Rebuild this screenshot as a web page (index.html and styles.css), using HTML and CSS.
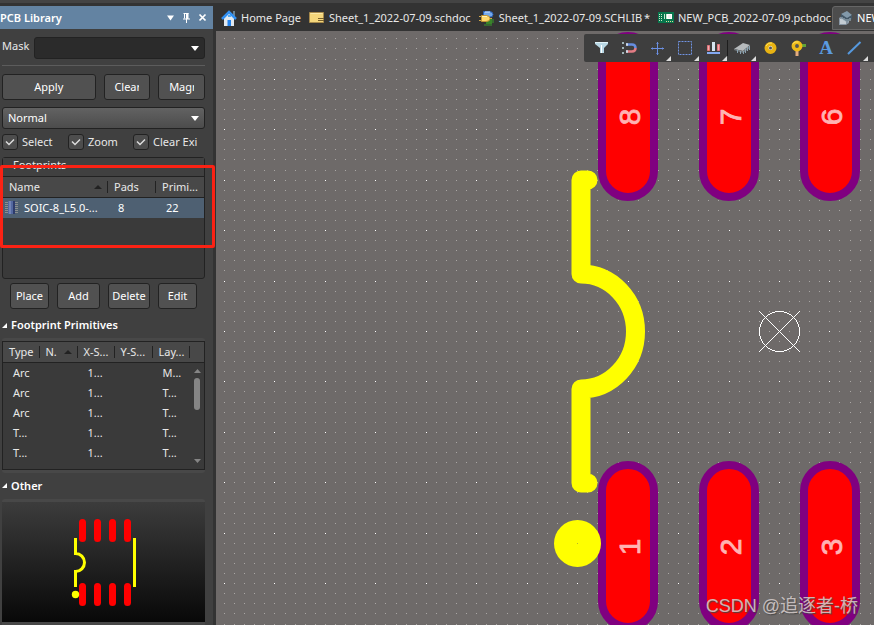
FILE: index.html
```
<!DOCTYPE html>
<html lang="en">
<head>
<meta charset="utf-8">
<title>PCB Library</title>
<link rel="stylesheet" href="styles.css">
</head>
<body>
<div class="app">
  <aside class="panel">
    <header class="panel-head">
      <h1>PCB Library</h1>
      <button type="button" aria-label="Panel menu"><svg width="16" height="16" viewBox="0 0 16 16"><path d="M5 5.500h7l-3.500 5z" fill="#fff"/></svg></button>
      <button type="button" aria-label="Pin panel"><svg width="16" height="16" viewBox="0 0 16 16"><path d="M5.500 3.500h5M6.500 3.500v5M5 9h7M8.500 9v4" stroke="#fff" fill="none"/><path d="M8 3h2.500v6H8z" fill="#fff"/></svg></button>
      <button type="button" aria-label="Close panel"><svg width="16" height="16" viewBox="0 0 16 16"><path d="M5.500 4.500l6 6M11.500 4.500l-6 6" stroke="#fff" stroke-width="1.700"/></svg></button>
    </header>
    <div class="panel-body">
      <div class="mask">
        <label for="mask">Mask</label>
        <select id="mask" class="dark"><option></option></select>
      </div>
      <div class="actions">
        <button type="button"><span>Apply</span></button>
        <button type="button"><span class="cut">Clear</span></button>
        <button type="button"><span class="cut">Magnify</span></button>
      </div>
      <select class="mode" aria-label="Highlight mode"><option>Normal</option></select>
      <div class="checks">
        <label><input type="checkbox" checked><span>Select</span></label>
        <label><input type="checkbox" checked><span>Zoom</span></label>
        <label><input type="checkbox" checked><span>Clear Exi</span></label>
      </div>
      <section class="footprints">
        <h2>Footprints</h2>
        <table>
          <colgroup><col class="w-name"><col class="w-pads"><col></colgroup>
          <thead><tr><th class="sorted">Name</th><th>Pads</th><th>Primi...</th></tr></thead>
          <tbody><tr class="selected"><td><svg width="14" height="14" viewBox="0 0 14 14"><path d="M0 1.500h3M0 3.500h3M0 5.500h3M0 7.500h3M0 9.500h3M0 11.500h3M10 1.500h3M10 3.500h3M10 5.500h3M10 7.500h3M10 9.500h3M10 11.500h3" stroke="#8b8f91"/><rect x="3" width="7" height="13" fill="#5368a0"/><path d="M4 0h2v13H4z" fill="#7284b5"/><path d="M8 0h2v13H8z" fill="#2e3c6c"/></svg>SOIC-8_L5.0-...</td><td>8</td><td>22</td></tr></tbody>
        </table>
      </section>
      <div class="edit">
        <button type="button">Place</button><button type="button">Add</button><button type="button">Delete</button><button type="button">Edit</button>
      </div>
      <h2 class="section">Footprint Primitives</h2>
      <section class="primitives">
        <table>
          <colgroup><col class="w-type"><col class="w-n"><col class="w-x"><col class="w-y"><col class="w-layer"><col></colgroup>
          <thead><tr><th>Type</th><th class="sorted">N.</th><th>X-S...</th><th>Y-S...</th><th>Lay...</th><th></th></tr></thead>
          <tbody>
            <tr><td>Arc</td><td></td><td>1...</td><td></td><td>M...</td><td></td></tr>
            <tr><td>Arc</td><td></td><td>1...</td><td></td><td>T...</td><td></td></tr>
            <tr><td>Arc</td><td></td><td>1...</td><td></td><td>T...</td><td></td></tr>
            <tr><td>T...</td><td></td><td>1...</td><td></td><td>T...</td><td></td></tr>
            <tr><td>T...</td><td></td><td>1...</td><td></td><td>T...</td><td></td></tr>
          </tbody>
        </table>
        <div class="scroll"><svg width="14" height="106" viewBox="0 0 14 106"><path d="M4 10h7L7.500 6zM4 96h7l-3.500 4z" fill="#858585"/><rect x="4" y="15" width="6" height="32" rx="3" fill="#858585"/></svg></div>
      </section>
      <h2 class="section">Other</h2>
      <section class="preview">
        <svg width="203" height="120" viewBox="2 502 203 120">
          <g stroke="#f00" stroke-width="7" stroke-linecap="round"><path d="M82.500 522.500v16M97.500 522.500v16M112.500 522.500v16M127.500 522.500v16M82.500 586.500v16M97.500 586.500v16M112.500 586.500v16M127.500 586.500v16"/></g>
          <path d="M77 539.500h-1.500v14a9 9 0 0 1 0 18v14H77M133 539.500h1.500v46H133" fill="none" stroke="#ff0" stroke-width="3"/>
          <circle cx="75.500" cy="594.500" r="3.700" fill="#ff0"/>
        </svg>
      </section>
    </div>
    <div class="marker"></div>
  </aside>
  <main>
    <nav class="tabs">
      <a href="#home"><svg width="16" height="16" viewBox="0 0 16 16"><path d="M12 1h2v5h-2z" fill="#698294"/><path d="M3 8l5-5 5 5v8H3z" fill="#e2e9ef"/><path d="M1 9l7-7 7 7" fill="none" stroke="#3190f2" stroke-width="2.500"/><path d="M6.500 10h3.500v6H6.500z" fill="#2283ed"/><path d="M7 5h3v2H7z" fill="#54aaf5"/></svg>Home Page</a>
      <a href="#sch"><svg width="16" height="16" viewBox="0 0 16 16"><path d="M.5 2.500h14v10H.5z" fill="#f4d67b" stroke="#a6894b"/><path d="M9 8.500h6M9 10.500h6" stroke="#775f2b"/><path d="M1.500 3.500h12" stroke="#fae9a9"/></svg>Sheet_1_2022-07-09.schdoc</a>
      <a href="#schlib"><svg width="16" height="16" viewBox="0 0 16 16"><path d="M7 9h6v5H7z" fill="#388329"/><path d="M6 14v2M8 14v2M10 14v2M12 14v2M13 10h2M13 12h2" stroke="#399a2c"/><path d="M4.500 1.500H10q4 0 4 3T10 7H4.500z" fill="#75a9eb" stroke="#2d65bb"/><path d="M6 2h5" stroke="#d5e8ff"/><path d="M0 6.500h3M0 10.500h3M9 8.500h4" stroke="#d2a94a"/><path d="M2.500 5.500H7q4 0 4 3t-4 3H2.500z" fill="#ffd96b" stroke="#c39533"/><path d="M3 6.500h5" stroke="#fff2b5"/></svg><span>Sheet_1_2022-07-09.SCHLIB&thinsp;*</span></a>
      <a href="#pcb"><svg width="16" height="16" viewBox="0 0 16 16"><path d="M0 2h16v11H0z" fill="#07764d"/><path d="M1 4.500h4M1 6.500h3M1 8.500h4M1 10.500h4" stroke="#d3e7c9" stroke-dasharray="1 1"/><path d="M6.500 4v5M8.500 4v5M13.500 4v5" stroke="#c6e7d0"/><rect x="9.500" y="4.500" width="4" height="4" fill="#eee" stroke="#fff"/><path d="M8 11.500h7" stroke="#e2d998" stroke-dasharray="1 1"/></svg>NEW_PCB_2022-07-09.pcbdoc</a>
      <a href="#pcblib" class="active"><svg width="16" height="16" viewBox="0 0 16 16"><path d="M1 8l3-2h7v7l-3 2H1z" fill="#8896a3"/><path d="M2 9h6v5H2z" fill="#c4ccd2"/><path d="M3 4l6-3 5 4-5 4z" fill="#8299aa"/><path d="M3 4v4l6 4V8zM9 8v4l5-3V5z" fill="#435767"/><path d="M4 7v3M6 8v3M8 9v3M10 9v3M12 8v3" stroke="#aebfc9"/></svg>NEW_PCB_2022-07-09.PcbLib</a>
    </nav>
    <div class="board">
      <svg class="canvas" viewBox="216 31 658 594" preserveAspectRatio="xMinYMin slice">
        <g shape-rendering="crispEdges"><path id="minor" fill="#aaa7a5"/><path id="major" fill="#fff"/></g>
        <g fill="#f00" stroke="#800080" stroke-width="8">
          <rect x="602" y="36" width="52" height="161" rx="26"/><rect x="703" y="36" width="52" height="161" rx="26"/><rect x="804" y="36" width="52" height="161" rx="26"/>
          <rect x="602" y="465" width="52" height="162" rx="26"/><rect x="703" y="465" width="52" height="162" rx="26"/><rect x="804" y="465" width="52" height="162" rx="26"/>
        </g>
        <g class="pad-no">
          <text transform="translate(640 117) rotate(-90)">8</text><text transform="translate(741 117) rotate(-90)">7</text><text transform="translate(842 117) rotate(-90)">6</text>
          <text transform="translate(640 547) rotate(-90)">1</text><text transform="translate(741 547) rotate(-90)">2</text><text transform="translate(842 547) rotate(-90)">3</text>
        </g>
        <path d="M588 180H581V274A54.500 57.500 0 0 1 581 389V483H588" fill="none" stroke="#ff0" stroke-width="19" stroke-linecap="round" stroke-linejoin="round"/>
        <circle cx="577.500" cy="543.500" r="23.500" fill="#ff0"/><path d="M577 543h1v1h-1z" fill="#b5b52b"/>
        <g fill="none" stroke="#fff" shape-rendering="crispEdges"><circle cx="779.500" cy="331.500" r="20"/><path d="M759 311l41 41M800 311l-41 41"/></g>
      </svg>
      <div class="toolbar">
        <button type="button" aria-label="Filter"><svg width="16" height="16" viewBox="0 0 16 16"><path d="M2 2h13v2l-4 4v5H7V8L2 4z" fill="#b8d7e4"/><path d="M2 2.500h13" stroke="#e1f2f8"/><path d="M8.500 5v8" stroke="#fff"/></svg></button>
        <button type="button" aria-label="Snapping"><svg width="16" height="16" viewBox="0 0 16 16"><path d="M1 2h2v2H1zM1 7h2v2H1zM1 12h2v2H1z" fill="#9fb4b8"/><path d="M5 4.500h6q3.500 0 3.500 3.500" fill="none" stroke="#668de0" stroke-width="2.500"/><path d="M5 11.500h6q3.500 0 3.500-3.500" fill="none" stroke="#e37c84" stroke-width="2.500"/><path d="M5 3.200h2v2.500H5zM5 10.200h2v2.500H5z" fill="#cbd8e6"/></svg></button>
        <button type="button" class="more" aria-label="Move"><svg width="16" height="16" viewBox="0 0 16 16"><path d="M2 8.500h13M8.500 2v13M3.500 7.500v2M13.500 7.500v2M7.500 3.500h2M7.500 13.500h2" stroke="#6b8fe2" fill="none"/></svg></button>
        <button type="button" class="more" aria-label="Select area"><svg width="16" height="16" viewBox="0 0 16 16"><rect x="1.500" y="1.500" width="13" height="13" fill="none" stroke="#7194e4" stroke-dasharray="2 1"/></svg></button>
        <button type="button" class="more" aria-label="Align"><svg width="16" height="16" viewBox="0 0 16 16"><path d="M2.500 5.500h2v5h-2zM12.500 4.500h2v6h-2z" fill="#efb0b3" stroke="#e0757b"/><path d="M7 2h3v9H7z" fill="#d5e6f0"/><path d="M2 12h13v2H2z" fill="#84a9f2"/></svg></button>
        <i class="sep"></i>
        <button type="button" class="more" aria-label="Place component"><svg width="16" height="16" viewBox="0 0 16 16"><path d="M0 9l9-6 7 2-7 6z" fill="#b6babc"/><path d="M0 9l9 2v2L0 10zM9 11l7-6v3l-7 5z" fill="#747d82"/><path d="M3.500 10v3M6.500 11v3M9.500 11v3M11.500 9v4M13.500 7v4M15.500 6v4" stroke="#8ba2b0"/></svg></button>
        <button type="button" aria-label="Place pad"><svg width="16" height="16" viewBox="0 0 16 16"><circle cx="8.500" cy="8" r="4" fill="#eee" stroke="#e8b313" stroke-width="4"/><circle cx="8.500" cy="8" r="1.500" fill="#555"/><path d="M4 6q2-4 6-3" fill="none" stroke="#ffe262"/></svg></button>
        <button type="button" aria-label="Place via"><svg width="16" height="16" viewBox="0 0 16 16"><path d="M10 5.500h6" stroke="#60a536" stroke-width="3"/><path d="M7 10v6" stroke="#e4ac81" stroke-width="3"/><circle cx="7" cy="6" r="3.700" fill="#555" stroke="#efbb18" stroke-width="3.500"/><path d="M2.500 4q2-3 6-2" fill="none" stroke="#ffe262"/></svg></button>
        <button type="button" class="letter" aria-label="Place string">A</button>
        <button type="button" class="more" aria-label="Place line"><svg width="16" height="16" viewBox="0 0 16 16"><path d="M2 14L14.500 2" stroke="#5699de" stroke-width="2"/></svg></button>
      </div>
      <p class="watermark">CSDN @追逐者-桥</p>
    </div>
  </main>
</div>
<script src="grid.js"></script>
</body>
</html>
```
FILE: grid.js
```
// Board grid: minor dots with a brighter dot at every fifth crossing, centred on the origin marker.
const origin = { x: 779, y: 331 };
const step = 10.09;
let minor = '';
let major = '';
for (let i = -56; i <= 60; i++) {
  for (let j = -30; j <= 60; j++) {
    const x = Math.round(origin.x + i * step - 0.05);
    const y = Math.round(origin.y + j * step - 0.05);
    if (x < 216 || y < 31) continue;
    const dot = `M${x} ${y}h1v1h-1z`;
    if (i % 5 === 0 && j % 5 === 0) major += dot;
    else minor += dot;
  }
}
document.getElementById('minor').setAttribute('d', minor);
document.getElementById('major').setAttribute('d', major);
```
FILE: styles.css
```
* { box-sizing: border-box; }
body {
  margin: 0;
  background: #333;
  color: #e8e8e8;
  font: 11px/16px "Noto Sans", "Open Sans", sans-serif;
}
h1, h2, p { margin: 0; font-size: inherit; }
button, select, input { font: inherit; color: inherit; margin: 0; }
svg { display: block; flex: none; }
.app {
  display: flex;
  height: 100vh;
  overflow: hidden;
  border-top: 3px solid #444;
}
.panel {
  position: relative;
  flex: none;
  width: 216px;
  padding: 3px 3px 0 0;
}
.panel-head {
  display: flex;
  align-items: center;
  height: 23px;
  padding-right: 3px;
  background: #6383a2;
  color: #fff;
}
.panel-head h1 { flex: 1; font-weight: 600; font-size: 11px; }
.panel-head button { padding: 0; border: 0; background: none; }
.panel-body {
  height: 100%;
  padding: 8px 8px 0 2px;
  background: #404040;
}
.mask {
  display: flex;
  align-items: center;
  justify-content: space-between;
  padding-bottom: 6px;
  border-bottom: 1px solid #5c5c5c;
}
.mask label { padding-bottom: 4px; }
select {
  appearance: none;
  height: 22px;
  padding: 0 5px;
  border: 1px solid #222;
  border-radius: 3px;
  color: #fff;
  background: url("data:image/svg+xml,%3Csvg xmlns='http://www.w3.org/2000/svg' width='8' height='5'%3E%3Cpath d='M0 0h8L4 5z' fill='white'/%3E%3C/svg%3E") no-repeat right 5px center, linear-gradient(#626262, #4c4c4c);
}
select.dark { width: 171px; background-color: #2b2b2b; background-image: url("data:image/svg+xml,%3Csvg xmlns='http://www.w3.org/2000/svg' width='8' height='5'%3E%3Cpath d='M0 0h8L4 5z' fill='white'/%3E%3C/svg%3E"); }
.actions {
  display: grid;
  grid-template-columns: 2fr 1fr 1fr;
  gap: 8px;
  margin: 8px 0 7px;
}
.actions button, .edit button {
  display: flex;
  align-items: center;
  justify-content: center;
  height: 26px;
  min-width: 0;
  padding: 0;
  border: 1px solid #222;
  border-radius: 3px;
  background: #515151;
  color: #fff;
}
.cut { width: 25px; overflow: hidden; text-align: left; }
.mode { display: block; width: 100%; }
.checks { display: grid; grid-template-columns: 66px 65px 1fr; margin-top: 5px; }
.checks label { display: flex; align-items: center; gap: 4px; white-space: nowrap; }
.checks input {
  appearance: none;
  width: 16px;
  height: 16px;
  border: 1px solid #222;
  border-radius: 3px;
  background: url("data:image/svg+xml,%3Csvg xmlns='http://www.w3.org/2000/svg' width='14' height='14'%3E%3Cpath d='M3 6.500l3 3 5-5' fill='none' stroke='%23ddd' stroke-width='1.500'/%3E%3C/svg%3E") #4d4d4d;
}
table { width: 100%; border-collapse: collapse; table-layout: fixed; }
th, td {
  height: 20px;
  padding: 0 0 0 6px;
  text-align: left;
  font-weight: 400;
  white-space: nowrap;
  overflow: hidden;
}
thead { background: #484848; }
th {
  background: linear-gradient(#222, #222) no-repeat right center / 1px 12px;
}
th:last-child { background: none; }
.sorted {
  background: url("data:image/svg+xml,%3Csvg xmlns='http://www.w3.org/2000/svg' width='8' height='4'%3E%3Cpath d='M0 4h8L4 0z' fill='%23222'/%3E%3C/svg%3E") no-repeat right 6px center, linear-gradient(#222, #222) no-repeat right center / 1px 12px;
}
thead tr { border-bottom: 1px solid #222; }
.footprints {
  height: 122px;
  margin-top: 7px;
  border: 1px solid #222;
  border-radius: 3px;
  background: #3a3a3a;
}
.footprints h2 {
  height: 19px;
  padding-left: 10px;
  border-bottom: 1px solid #222;
  background: #404040;
  font-weight: 400;
  line-height: 14px;
}
.w-name { width: 105px; }
.w-pads { width: 48px; }
.selected { background: #4e6072; color: #fff; }
.footprints td { padding-left: 10px; }
.footprints td:first-child { display: flex; align-items: center; gap: 5px; padding-left: 2px; }
.edit {
  display: grid;
  grid-template-columns: 39px 43px 42px 39px;
  gap: 8px;
  margin: 4px 0 0 8px;
}
.section { display: flex; align-items: center; gap: 4px; height: 26px; color: #fff; font-weight: 600; }
.section::before { content: ""; border: solid transparent; border-width: 0 0 5px 5px; border-bottom-color: #fff; }
.edit + .section { margin-top: 3px; }
.primitives, .preview { border-radius: 3px; background: #484848; padding: 3px 0; }
.primitives { display: grid; grid-template-columns: 1fr; }
.primitives table, .scroll { grid-area: 1 / 1; }
.primitives table { border: 1px solid #222; background: #3a3a3a; height: 128px; }
.primitives th { height: 21px; }
.primitives tbody::after { content: ""; display: block; height: 6px; }
.primitives td { padding-left: 10px; }
.scroll { place-self: end; padding: 0 1px 1px 0; }
.w-type { width: 37px; }
.w-n { width: 38px; }
.w-x { width: 37px; }
.w-y { width: 38px; }
.w-layer { width: 37px; }
.preview { height: 128px; }
.preview svg { background: linear-gradient(#3c3c3c, #080808); }
.marker {
  position: absolute;
  top: 162px;
  left: 0;
  width: 215px;
  height: 83px;
  border: 3px solid #fb2214;
  border-radius: 2px;
}
main { flex: 1; min-width: 0; display: flex; flex-direction: column; }
.tabs { display: flex; height: 28px; padding: 3px 0 0 5px; overflow: hidden; }
.tabs a {
  display: flex;
  align-items: center;
  gap: 4px;
  flex: none;
  height: 24px;
  margin-right: 8px;
  color: inherit;
  text-decoration: none;
  white-space: nowrap;
}
.tabs .active { gap: 3px; margin: 0 0 0 -7px; padding-left: 5px; border: 1px solid #666; border-radius: 3px 0 0 0; background: #4d4d4d; color: #fff; }
.board { position: relative; flex: 1; min-height: 0; background: #6e6a69; overflow: hidden; }
.canvas { width: 100%; height: 100%; }
.pad-no text { fill: #ffb3b3; stroke: #ffb3b3; stroke-width: .8px; font: 30px "Liberation Sans", sans-serif; text-anchor: middle; }
.toolbar {
  position: absolute;
  top: 3px;
  right: 0;
  display: flex;
  width: 290px;
  height: 28px;
  padding-left: 3px;
  border-radius: 2px 0 0 2px;
  background: #3e3e3e;
}
.toolbar button {
  position: relative;
  display: flex;
  align-items: center;
  justify-content: center;
  flex: none;
  width: 28px;
  padding: 0;
  border: 0;
  background: none;
}
.more::after {
  content: "";
  position: absolute;
  right: 0;
  bottom: 1px;
  border: solid transparent;
  border-width: 0 0 5px 5px;
  border-bottom-color: #ddd;
}
.toolbar .letter { color: #5b9be0; font: bold 19px "Liberation Serif", serif; }
.sep { width: 1px; height: 16px; margin-top: 6px; background: #1d1d1d; }
.watermark {
  position: absolute;
  right: 16px;
  bottom: 7px;
  color: #cfc6c6;
  font: 18px/24px "Liberation Sans", "Noto Sans CJK SC", sans-serif;
  text-shadow: 1px 1px 1px #444;
  opacity: .9;
}
```
